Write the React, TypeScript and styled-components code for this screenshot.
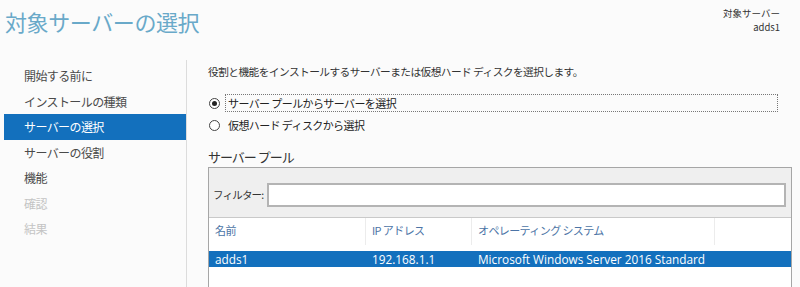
import React from 'react';
import styled, { createGlobalStyle } from 'styled-components';

const GlobalStyle = createGlobalStyle`
  html, body {
    margin: 0;
    padding: 0;
    background: #fbfbfb;
    font-family: "Noto Sans CJK JP", "Noto Sans", sans-serif;
    overflow: hidden;
  }
`;

const Page = styled.div`
  width: 800px;
  height: 287px;
  display: flex;
  flex-direction: column;
  overflow: hidden;
`;

const Header = styled.div`
  height: 60px;
  display: flex;
  justify-content: space-between;
  align-items: flex-start;
  padding: 0 20px 0 5px;
  box-sizing: border-box;
`;

const Title = styled.h1`
  margin: 6px 0 0;
  font-size: 22px;
  font-weight: 400;
  line-height: 30px;
  color: #69a9c9;
  letter-spacing: -0.4px;
`;

const TargetInfo = styled.div`
  margin-top: 6px;
  display: flex;
  flex-direction: column;
  align-items: flex-end;
  font-size: 9.5px;
  line-height: 14px;
  color: #333;
`;

const Body = styled.div`
  flex: 1;
  display: flex;
  min-height: 0;
`;

const Nav = styled.ul`
  width: 186px;
  margin: 0;
  padding: 3px 0 0;
  list-style: none;
  border-right: 1px solid #dcdcdc;
`;

const NavItem = styled.li<{ $selected?: boolean; $disabled?: boolean }>`
  height: 25.5px;
  line-height: 25.5px;
  margin-left: 4px;
  padding-left: 20px;
  font-size: 12px;
  letter-spacing: -0.6px;
  background: ${p => (p.$selected ? '#1370bd' : 'transparent')};
  color: ${p => (p.$selected ? '#ffffff' : p.$disabled ? '#c4c4c4' : '#4a4a4a')};
`;

const Main = styled.div`
  flex: 1;
  padding: 4px 10px 0 21px;
  display: flex;
  flex-direction: column;
  min-width: 0;
`;

const Description = styled.p`
  margin: 0;
  font-size: 10.7px;
  line-height: 16px;
  color: #333;
  letter-spacing: -0.55px;
`;

const RadioGroup = styled.div`
  margin-top: 14px;
  display: flex;
  flex-direction: column;
  gap: 4px;
`;

const RadioRow = styled.label`
  height: 18px;
  display: flex;
  align-items: center;
  gap: 5px;
  font-size: 11px;
  color: #222;
  letter-spacing: -0.6px;
`;

const RadioDot = styled.span<{ $checked?: boolean }>`
  width: 11px;
  height: 11px;
  margin-left: 1px;
  border: 1px solid #444;
  border-radius: 50%;
  background: #fff;
  box-sizing: border-box;
  display: flex;
  align-items: center;
  justify-content: center;

  &::after {
    content: '';
    width: 5px;
    height: 5px;
    border-radius: 50%;
    background: ${p => (p.$checked ? '#222' : 'transparent')};
  }
`;

const RadioLabel = styled.span<{ $focused?: boolean }>`
  height: 18px;
  line-height: 16px;
  box-sizing: border-box;
  padding: 0 2px;
  border: 1px dotted ${p => (p.$focused ? '#777' : 'transparent')};
  flex: ${p => (p.$focused ? '0 0 553px' : '0 0 auto')};
`;

const SectionTitle = styled.h2`
  margin: 14px 0 0;
  font-size: 13px;
  font-weight: 400;
  line-height: 18px;
  color: #333;
  letter-spacing: -1px;
  white-space: pre;
`;

const PoolBox = styled.div`
  margin-top: 1px;
  width: 582px;
  flex: 1;
  border: 1px solid #a6a6a6;
  border-bottom: none;
  background: #fff;
`;

const FilterBar = styled.div`
  height: 50px;
  box-sizing: border-box;
  padding: 15px 5px 0 4px;
  background: #efefef;
  border-bottom: 1px solid #c9c9c9;
  display: flex;
  align-items: flex-start;
  gap: 4px;
`;

const FilterLabel = styled.span`
  line-height: 24px;
  font-size: 10.5px;
  color: #333;
  letter-spacing: -0.8px;
`;

const FilterInput = styled.input`
  flex: 1;
  height: 24px;
  box-sizing: border-box;
  border: 2px solid #b4b4b4;
  background: #fff;
  outline: none;
  font: inherit;
`;

const Grid = styled.div`
  display: grid;
  grid-template-columns: 157px 106px 243px 1fr;
`;

const HeaderRow = styled(Grid)`
  height: 33px;
  align-items: start;
`;

const HeaderCell = styled.div<{ $last?: boolean }>`
  height: 27px;
  box-sizing: border-box;
  padding: 4px 6px 0 6px;
  font-size: 11px;
  line-height: 16px;
  color: #4c74a6;
  letter-spacing: -0.6px;
  border-right: ${p => (p.$last ? 'none' : '1px solid #ececec')};
`;

const DataRow = styled(Grid)<{ $selected?: boolean }>`
  background: ${p => (p.$selected ? '#1370bd' : 'transparent')};
  color: ${p => (p.$selected ? '#ffffff' : '#222')};
`;

const DataCell = styled.div`
  height: 16px;
  line-height: 16px;
  padding: 0 6px;
  font-family: "Open Sans", "Noto Sans", sans-serif;
  font-size: 11.8px;
  white-space: nowrap;
  overflow: hidden;
`;

const navItems = [
  { label: '開始する前に' },
  { label: 'インストールの種類' },
  { label: 'サーバーの選択', selected: true },
  { label: 'サーバーの役割' },
  { label: '機能' },
  { label: '確認', disabled: true },
  { label: '結果', disabled: true },
];

const servers = [
  { name: 'adds1', ip: '192.168.1.1', os: 'Microsoft Windows Server 2016 Standard' },
];

export default function App() {
  return (
    <Page>
      <GlobalStyle />
      <Header>
        <Title>対象サーバーの選択</Title>
        <TargetInfo>
          <span>対象サーバー</span>
          <span>adds1</span>
        </TargetInfo>
      </Header>
      <Body>
        <Nav>
          {navItems.map(item => (
            <NavItem key={item.label} $selected={item.selected} $disabled={item.disabled}>
              {item.label}
            </NavItem>
          ))}
        </Nav>
        <Main>
          <Description>
            役割と機能をインストールするサーバーまたは仮想ハード ディスクを選択します。
          </Description>
          <RadioGroup>
            <RadioRow>
              <RadioDot $checked />
              <RadioLabel $focused>サーバー プールからサーバーを選択</RadioLabel>
            </RadioRow>
            <RadioRow>
              <RadioDot />
              <RadioLabel>仮想ハード ディスクから選択</RadioLabel>
            </RadioRow>
          </RadioGroup>
          <SectionTitle>サーバー プール</SectionTitle>
          <PoolBox>
            <FilterBar>
              <FilterLabel>フィルター:</FilterLabel>
              <FilterInput readOnly />
            </FilterBar>
            <HeaderRow>
              <HeaderCell>名前</HeaderCell>
              <HeaderCell>IP アドレス</HeaderCell>
              <HeaderCell>オペレーティング システム</HeaderCell>
              <HeaderCell $last />
            </HeaderRow>
            {servers.map(s => (
              <DataRow key={s.name} $selected>
                <DataCell>{s.name}</DataCell>
                <DataCell>{s.ip}</DataCell>
                <DataCell>{s.os}</DataCell>
                <DataCell />
              </DataRow>
            ))}
          </PoolBox>
        </Main>
      </Body>
    </Page>
  );
}
